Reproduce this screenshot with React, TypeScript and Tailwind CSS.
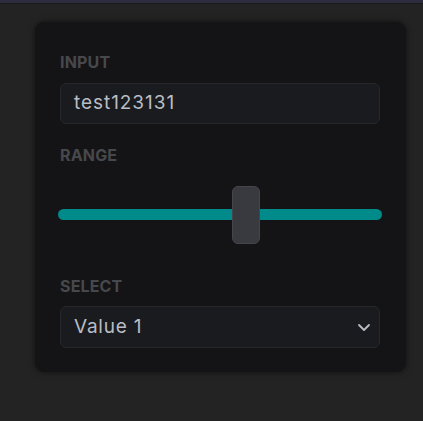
import React from "react";

export default function App() {
  return (
    <div className="min-h-[421px] w-[423px] bg-[#232323]" style={{ fontFamily: "Inter, 'Noto Sans', sans-serif" }}>
      <div className="h-[4px] bg-[#2e2d40] border-b border-[#19191c]" />
      <div className="pl-[35px] pt-[18px]">
        <div className="w-[371px] rounded-[9px] bg-[#141416] pl-[25px] pr-[26px] pt-[30px] pb-[24px] shadow-[0_0_6px_rgba(0,0,0,0.55)]">
          <div className="h-[20px] text-[16px] leading-[20px] font-bold tracking-[0.01em] text-[#47484c]">INPUT</div>
          <div className="mt-[11px] flex h-[41px] items-center rounded-[6px] border border-[#26272b] bg-[#1a1b1e] px-[13px] text-[19px] tracking-[0.05em] text-[#b9bdc5]">
            test123131
          </div>
          <div className="mt-[21px] h-[20px] text-[16px] leading-[20px] font-bold tracking-[0.01em] text-[#47484c]">RANGE</div>
          <div className="relative mt-[21px] -mx-[2px] h-[58px]">
            <div className="absolute left-0 right-0 top-[23px] h-[11px] rounded-full bg-[#008a8a]" />
            <div className="absolute left-[174px] top-0 h-[58px] w-[28px] rounded-[6px] border border-[#45464b] bg-[#393a3f]" />
          </div>
          <div className="mt-[32px] h-[20px] text-[16px] leading-[20px] font-bold tracking-[0.01em] text-[#47484c]">SELECT</div>
          <div className="mt-[10px] flex h-[42px] items-center justify-between rounded-[6px] border border-[#26272b] bg-[#1a1b1e] pl-[13px] pr-[8px] text-[19px] tracking-[0.04em] text-[#b9bdc5]">
            <span>Value 1</span>
            <svg width="14" height="10" viewBox="0 0 14 10" fill="none">
              <path d="M2 3 L7 8 L12 3" stroke="#b9bdc5" strokeWidth="1.8" strokeLinecap="round" strokeLinejoin="round" />
            </svg>
          </div>
        </div>
      </div>
    </div>
  );
}
